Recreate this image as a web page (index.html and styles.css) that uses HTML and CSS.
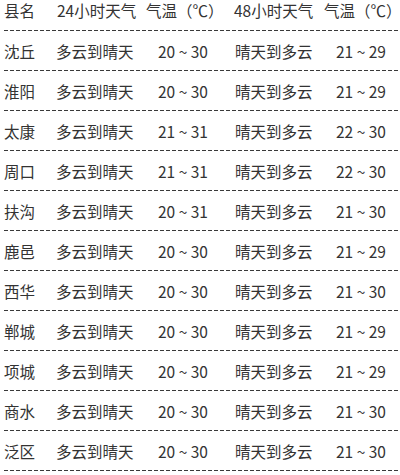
FILE: index.html
```html
<!DOCTYPE html>
<html lang="zh-CN">
<head>
<meta charset="utf-8">
<link rel="stylesheet" href="styles.css">
</head>
<body>
<div class="table">
  <div class="row head">
    <div class="c1">县名</div><div class="c2">24小时天气</div><div class="c3">气温（℃）</div><div class="c4">48小时天气</div><div class="c5">气温（℃）</div>
  </div>
  <div class="row"><div class="c1">沈丘</div><div class="c2">多云到晴天</div><div class="c3">20 ~ 30</div><div class="c4">晴天到多云</div><div class="c5">21 ~ 29</div></div>
  <div class="row"><div class="c1">淮阳</div><div class="c2">多云到晴天</div><div class="c3">20 ~ 30</div><div class="c4">晴天到多云</div><div class="c5">21 ~ 29</div></div>
  <div class="row"><div class="c1">太康</div><div class="c2">多云到晴天</div><div class="c3">21 ~ 31</div><div class="c4">晴天到多云</div><div class="c5">22 ~ 30</div></div>
  <div class="row"><div class="c1">周口</div><div class="c2">多云到晴天</div><div class="c3">21 ~ 31</div><div class="c4">晴天到多云</div><div class="c5">22 ~ 30</div></div>
  <div class="row"><div class="c1">扶沟</div><div class="c2">多云到晴天</div><div class="c3">20 ~ 31</div><div class="c4">晴天到多云</div><div class="c5">21 ~ 30</div></div>
  <div class="row"><div class="c1">鹿邑</div><div class="c2">多云到晴天</div><div class="c3">20 ~ 30</div><div class="c4">晴天到多云</div><div class="c5">21 ~ 29</div></div>
  <div class="row"><div class="c1">西华</div><div class="c2">多云到晴天</div><div class="c3">20 ~ 30</div><div class="c4">晴天到多云</div><div class="c5">21 ~ 30</div></div>
  <div class="row"><div class="c1">郸城</div><div class="c2">多云到晴天</div><div class="c3">20 ~ 30</div><div class="c4">晴天到多云</div><div class="c5">21 ~ 29</div></div>
  <div class="row"><div class="c1">项城</div><div class="c2">多云到晴天</div><div class="c3">20 ~ 30</div><div class="c4">晴天到多云</div><div class="c5">21 ~ 29</div></div>
  <div class="row"><div class="c1">商水</div><div class="c2">多云到晴天</div><div class="c3">20 ~ 30</div><div class="c4">晴天到多云</div><div class="c5">21 ~ 30</div></div>
  <div class="row"><div class="c1">泛区</div><div class="c2">多云到晴天</div><div class="c3">20 ~ 30</div><div class="c4">晴天到多云</div><div class="c5">21 ~ 30</div></div>
</div>
</body>
</html>
```

FILE: styles.css
```css
html, body {
  margin: 0;
  padding: 0;
  background: #ffffff;
}
body {
  font-family: "Noto Sans CJK SC", "Noto Sans", sans-serif;
  font-size: 15.5px;
  color: #333333;
  overflow: hidden;
}
.table {
  padding-left: 4px;
}
.row {
  display: grid;
  grid-template-columns: 52px 90px 74px 104px 74px;
  align-items: center;
  height: 39px;
  padding-bottom: 1px;
  line-height: 20px;
  white-space: nowrap;
  background-image: linear-gradient(to right, #3a3a3a 0 4px, transparent 4px 6px);
  background-size: 6px 1px;
  background-repeat: repeat-x;
  background-position: left bottom;
}
.row.head {
  height: 30px;
  align-items: start;
}
.c3, .c5 {
  text-align: center;
}
.c4 {
  padding-left: 15px;
}
.head .c2 {
  padding-left: 1px;
}
.head .c4 {
  padding-left: 14px;
}
```
